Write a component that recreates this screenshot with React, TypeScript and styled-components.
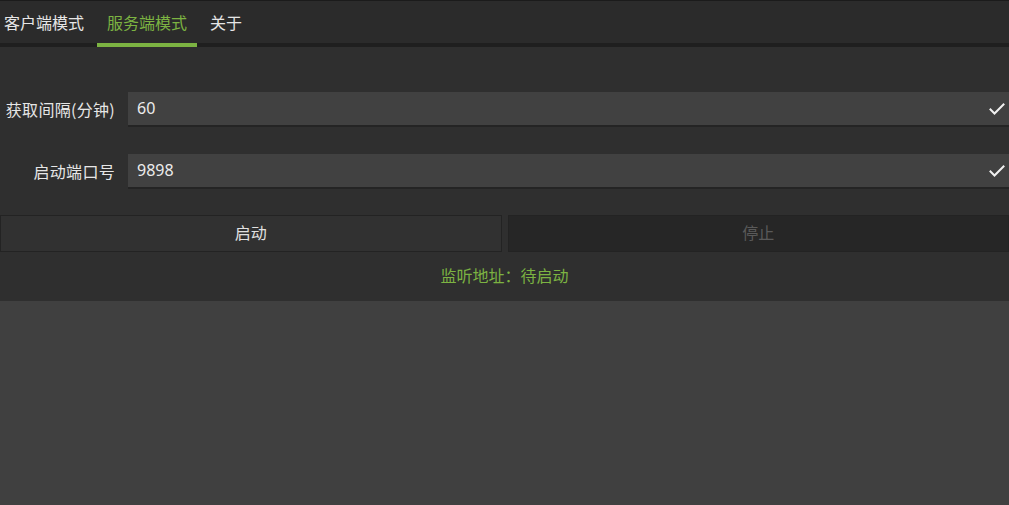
import React from "react";
import styled, { createGlobalStyle } from "styled-components";

const Global = createGlobalStyle`
  html, body { margin: 0; padding: 0; background: #404040; }
  body { font-family: "Noto Sans CJK SC", "Noto Sans", sans-serif; }
  * { box-sizing: border-box; }
`;

const Page = styled.div`
  width: 1009px;
  height: 505px;
  background: #404040;
  display: flex;
  flex-direction: column;
`;

const TabBar = styled.div`
  display: flex;
  gap: 3px;
  height: 47px;
  background: #2b2b2b;
  border-top: 1px solid #1b1b1b;
  border-bottom: 4px solid #1f1f1f;
`;

const Tab = styled.div<{ $active?: boolean }>`
  display: flex;
  align-items: center;
  padding: 0 10px 1px;
  margin-bottom: -4px;
  border-bottom: 4px solid ${(p) => (p.$active ? "#7cb342" : "transparent")};
  color: ${(p) => (p.$active ? "#7cb342" : "#e6e6e6")};
  font-size: 16px;
  line-height: 1;
  &:first-child { padding-left: 4px; }
`;

const Panel = styled.div`
  background: #2f2f2f;
  display: flex;
  flex-direction: column;
  padding-top: 45px;
`;

const Form = styled.div`
  display: flex;
  flex-direction: column;
  gap: 27px;
`;

const Row = styled.div`
  display: flex;
  align-items: center;
`;

const Label = styled.div`
  width: 128px;
  padding-right: 13px;
  padding-bottom: 2px;
  text-align: right;
  color: #e6e6e6;
  font-size: 16px;
  letter-spacing: 0.3px;
  white-space: nowrap;
`;

const Field = styled.div`
  flex: 1;
  height: 35px;
  background: #414141;
  border-bottom: 2px solid #242424;
  display: flex;
  align-items: center;
  padding: 0 3px 0 9px;
`;

const Value = styled.div`
  flex: 1;
  color: #ececec;
  font-size: 16px;
  padding-bottom: 1px;
  font-family: "Noto Sans", "Noto Sans CJK SC", sans-serif;
`;

const Buttons = styled.div`
  display: flex;
  gap: 6px;
  margin-top: 26px;
`;

const Button = styled.div<{ $disabled?: boolean }>`
  flex: 1;
  height: 37px;
  display: flex;
  align-items: center;
  justify-content: center;
  padding-bottom: 3px;
  font-size: 16px;
  background: ${(p) => (p.$disabled ? "#262626" : "#313131")};
  border: 1px solid #232323;
  color: ${(p) => (p.$disabled ? "#5a5a5a" : "#e0e0e0")};
`;

const Status = styled.div`
  height: 49px;
  display: flex;
  align-items: center;
  justify-content: center;
  padding-bottom: 3px;
  color: #7cb342;
  font-size: 16px;
`;

const Check = () => (
  <svg width="18" height="18" viewBox="0 0 18 18" fill="none">
    <path d="M2.5 9.5 L6.5 13.5 L15.5 4.5" stroke="#f0f0f0" strokeWidth="2" strokeLinecap="square" />
  </svg>
);

export default function App() {
  return (
    <Page>
      <Global />
      <TabBar>
        <Tab>客户端模式</Tab>
        <Tab $active>服务端模式</Tab>
        <Tab>关于</Tab>
      </TabBar>
      <Panel>
        <Form>
          <Row>
            <Label>获取间隔(分钟)</Label>
            <Field>
              <Value>60</Value>
              <Check />
            </Field>
          </Row>
          <Row>
            <Label>启动端口号</Label>
            <Field>
              <Value>9898</Value>
              <Check />
            </Field>
          </Row>
        </Form>
        <Buttons>
          <Button>启动</Button>
          <Button $disabled>停止</Button>
        </Buttons>
        <Status>监听地址：待启动</Status>
      </Panel>
    </Page>
  );
}
